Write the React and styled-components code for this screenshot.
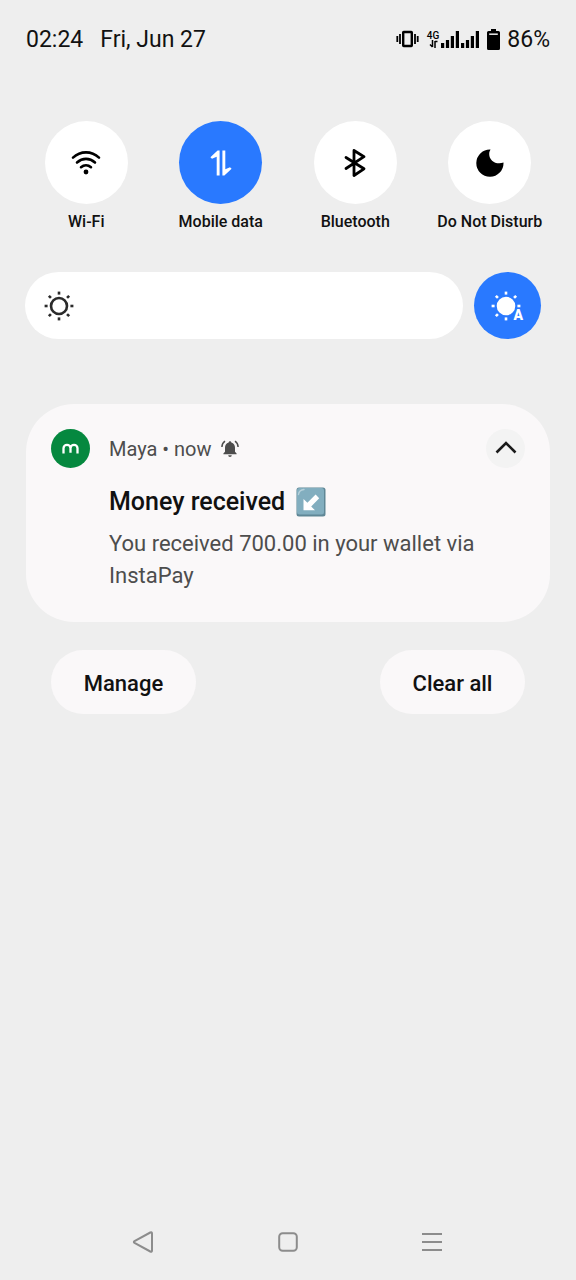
import React from 'react';
import styled, { createGlobalStyle } from 'styled-components';

const GlobalStyle = createGlobalStyle`
  * {
    box-sizing: border-box;
  }

  body {
    margin: 0;
    background: #eeeeee;
    color: #111111;
    font-family: Roboto, "Liberation Sans", sans-serif;
  }

  button,
  input {
    font-family: inherit;
    color: inherit;
  }

  svg {
    display: block;
    flex-shrink: 0;
  }
`;

const Shade = styled.div`
  display: flex;
  flex-direction: column;
  min-height: 100vh;
`;

const StatusBar = styled.header`
  display: flex;
  align-items: center;
  justify-content: space-between;
  height: 80px;
  padding: 0 26px;
  font-size: 23px;
  line-height: 28px;
`;

const StatusGroup = styled.div`
  display: flex;
  align-items: center;
  gap: ${({ $gap }) => $gap}px;
`;

const StatusIcons = styled.div`
  display: flex;
  align-items: center;
  gap: 8px;
  padding-bottom: 2px;
  color: #000000;
`;

const Network = styled.div`
  display: flex;
  flex-direction: column;
  align-items: center;
  font-size: 10px;
  font-weight: 500;
  line-height: 9px;
`;

const Signal = styled.div`
  display: flex;
  align-items: center;
  gap: 2px;
`;

const Tiles = styled.section`
  display: grid;
  grid-template-columns: repeat(4, 1fr);
  margin-top: 41px;
  padding: 0 19px;
`;

const Tile = styled.button`
  display: flex;
  flex-direction: column;
  align-items: center;
  gap: 8px;
  padding: 0;
  border: none;
  background: none;
  font-size: 16px;
  font-weight: 500;
  line-height: 20px;
  white-space: nowrap;
  cursor: pointer;
`;

const TileCircle = styled.span`
  display: flex;
  align-items: center;
  justify-content: center;
  width: 83px;
  height: 83px;
  border-radius: 50%;
  background: ${({ $active }) => ($active ? '#2979ff' : '#ffffff')};
  color: ${({ $active }) => ($active ? '#ffffff' : '#000000')};
`;

const BrightnessRow = styled.section`
  display: flex;
  align-items: center;
  gap: 11px;
  margin-top: 40px;
  padding: 0 35px 0 25px;
`;

const SliderWrap = styled.label`
  position: relative;
  flex: 1;
  height: 67px;
  color: #2b2b2b;

  svg {
    position: absolute;
    top: 18px;
    left: 18px;
    pointer-events: none;
  }
`;

const Slider = styled.input`
  display: block;
  width: 100%;
  height: 100%;
  margin: 0;
  border-radius: 34px;
  background: #ffffff;
  appearance: none;
  cursor: pointer;

  &::-webkit-slider-thumb {
    appearance: none;
    width: 67px;
    height: 67px;
    background: transparent;
  }
`;

const AutoButton = styled.button`
  position: relative;
  display: flex;
  align-items: center;
  justify-content: center;
  width: 67px;
  height: 67px;
  padding: 0 4px 0 0;
  border: none;
  border-radius: 50%;
  background: #2979ff;
  color: #ffffff;
  cursor: pointer;
`;

const AutoBadge = styled.span`
  position: absolute;
  right: 18px;
  bottom: 17px;
  font-size: 14px;
  font-weight: 900;
  line-height: 13px;
`;

const Card = styled.article`
  display: grid;
  grid-template-columns: 39px 1fr;
  column-gap: 19px;
  margin: 65px 26px 0;
  padding: 25px 25px 30px;
  border-radius: 48px;
  background: #faf8f9;
`;

const CardHeader = styled.div`
  display: flex;
  align-items: center;
  justify-content: space-between;
  height: 39px;
`;

const AppInfo = styled.div`
  display: flex;
  align-items: center;
  gap: 9px;
  color: #4d4d4d;
  font-size: 20px;
  line-height: 24px;
`;

const CollapseButton = styled.button`
  display: flex;
  align-items: center;
  justify-content: center;
  width: 39px;
  height: 39px;
  padding: 0 0 2px;
  border: none;
  border-radius: 50%;
  background: #f3f3f3;
  cursor: pointer;
`;

const CardBody = styled.div`
  grid-column: 2;
`;

const Title = styled.h2`
  display: flex;
  align-items: center;
  gap: 11px;
  margin: 18px 0 10px;
  font-size: 25px;
  font-weight: 500;
  line-height: 32px;
`;

const Message = styled.p`
  margin: 0;
  color: #4d4d4d;
  font-size: 22px;
  line-height: 32px;
`;

const Actions = styled.div`
  display: flex;
  justify-content: space-between;
  margin-top: 28px;
  padding: 0 51px;
`;

const ActionButton = styled.button`
  min-width: 145px;
  height: 64px;
  padding: 3px 32px 0;
  border: none;
  border-radius: 32px;
  background: #faf8f9;
  font-size: 22px;
  font-weight: 500;
  line-height: 28px;
  cursor: pointer;
`;

const NavBar = styled.nav`
  display: flex;
  justify-content: center;
  gap: 96px;
  margin-top: auto;
  padding-bottom: 14px;
`;

const NavButton = styled.button`
  display: flex;
  align-items: center;
  justify-content: center;
  width: 48px;
  height: 48px;
  padding: 0;
  border: none;
  background: none;
  color: #8c8c8c;
  cursor: pointer;
`;

const RAYS = [0, 45, 90, 135, 180, 225, 270, 315];

const VibrateIcon = () => (
  <svg width="23" height="18" viewBox="0 0 23 18" fill="none" stroke="currentColor" strokeWidth="1.8">
    <rect x="7.200" y="2" width="8.600" height="14" rx="0.500" strokeWidth="2.400" />
    <path d="M4 4v10M19 4v10M1.300 6v6M21.700 6v6" />
  </svg>
);

const DataArrowsIcon = () => (
  <svg width="9" height="8" viewBox="0 0 9 8" fill="none" stroke="currentColor" strokeWidth="1.5">
    <path d="M3.500 0v7M1 4.500L3.500 7M6 8V1M6 1.500h2.500" />
  </svg>
);

const SignalIcon = () => (
  <svg width="18" height="17" viewBox="0 0 18 17" fill="currentColor">
    <path d="M0 12h3.200v5H0zM4.900 9h3.200v8H4.900zM9.800 5H13v12H9.800zM14.800 0H18v17h-3.200z" />
  </svg>
);

const BatteryIcon = () => (
  <svg width="13" height="21" viewBox="0 0 13 21">
    <path d="M4 0h5v2h2.500q1.500 0 1.500 1.500v16q0 1.500-1.500 1.500h-10Q0 21 0 19.500v-16Q0 2 1.500 2H4z" fill="currentColor" />
    <path d="M2.200 5.200h8.600" stroke="#e0e0e0" strokeWidth="1.600" />
  </svg>
);

const WifiIcon = () => (
  <svg width="30" height="24" viewBox="0 0 30 24" fill="none" stroke="currentColor" strokeWidth="2.6" strokeLinecap="round">
    <path d="M2 6.600C9.500-.4 20.500-.4 28 6.600M6 11.500c5.400-4.800 12.600-4.800 18 0M10 16.200c3-2.600 7-2.600 10 0" />
    <circle cx="15" cy="21" r="2.400" fill="currentColor" stroke="none" />
  </svg>
);

const MobileDataIcon = () => (
  <svg width="24" height="28" viewBox="0 0 24 28" fill="currentColor">
    <path d="M10.600 1.500v25H7.700V7.800L3 9.800 1.400 8.200 8.600 1.500zM13.400 1.500h2.900v18.700l4.700-2 1.600 1.600-7.200 6.700h-2z" />
  </svg>
);

const BluetoothIcon = () => (
  <svg width="22" height="30" viewBox="0 0 22 30" fill="none" stroke="currentColor" strokeWidth="2.800" strokeLinejoin="round" strokeLinecap="round">
    <path d="M2 9.500l18 11.300L10 27.500V2.500l10 6.200L2 20.500" />
  </svg>
);

const MoonIcon = () => (
  <svg width="28" height="28" viewBox="0 0 28 28" fill="currentColor">
    <path d="M14.500.5A8.800 8.800 0 0 0 13.200 5c0 6.500 6.800 11.300 14.300 8.600A13.600 13.600 0 1 1 14.500.5z" />
  </svg>
);

const SunIcon = ({ filled, rays = RAYS }) => (
  <svg width="32" height="32" viewBox="0 0 32 32" fill="none" stroke="currentColor" strokeWidth="2.600">
    <circle cx="16" cy="16" r="8" fill={filled ? 'currentColor' : 'none'} />
    {rays.map((angle) => (
      <path key={angle} d="M16 1.600v3" transform={`rotate(${angle} 16 16)`} />
    ))}
    {/* notch that keeps the badge letter clear of the disc */}
    {filled && <path d="M22.500 32l4-12.500h3L33 32z" fill="#2979ff" stroke="#2979ff" strokeWidth="2" />}
  </svg>
);

const MayaLogo = () => (
  <svg width="39" height="39" viewBox="0 0 39 39" fill="none" role="img" aria-label="Maya">
    <circle cx="19.500" cy="19.500" r="19.500" fill="#05883f" />
    <path
      d="M12.500 24.500v-5.200a3.500 3.500 0 0 1 7 0v4.500M19.500 19.300a3.500 3.500 0 0 1 7 0v5.200"
      stroke="#ffffff"
      strokeWidth="2.300"
    />
  </svg>
);

const BellIcon = () => (
  <svg width="18" height="18" viewBox="0 0 18 18" fill="currentColor">
    <path d="M9 1.200c.9 0 1.300.6 1.300 1.300 2.600.6 3.700 2.700 3.700 5.200v4.100l1.600 1.600v.9H2.400v-.9L4 11.800V7.700c0-2.500 1.100-4.600 3.700-5.200 0-.7.4-1.300 1.300-1.300zM7.200 15.300h3.600a1.800 1.800 0 0 1-3.600 0z" />
    <path d="M4 1.200Q1 3.200.9 7M14 1.200q3 2 3.100 5.800" fill="none" stroke="currentColor" strokeWidth="1.500" />
  </svg>
);

const ChevronIcon = () => (
  <svg width="24" height="16" viewBox="0 0 24 16" fill="none" stroke="#1b1b1b" strokeWidth="2.600">
    <path d="M2.500 12.500L12 3l9.500 9.500" />
  </svg>
);

const ArrowEmoji = () => (
  <svg width="30" height="30" viewBox="0 0 30 30" role="img" aria-label="South-west arrow">
    <rect x="0.500" y="0.500" width="29" height="29" rx="2.500" fill="#5f8796" />
    <rect x="1" y="1" width="27" height="26.500" rx="2.500" fill="#82aebf" />
    <path d="M2.500 7.500Q3 3 8 2.500" fill="none" stroke="#b5d0da" strokeWidth="1.400" strokeLinecap="round" />
    <path d="M7.500 12v11.300H19l-3.800-3.900 8-8.200-3.600-3.700-8.200 8.200z" fill="#ffffff" />
  </svg>
);

const BackIcon = () => (
  <svg width="24" height="22" viewBox="0 0 24 22" fill="none" stroke="currentColor" strokeWidth="2" strokeLinejoin="round">
    <path d="M2.500 10.200Q1.200 11 2.500 11.800L18.300 20.500Q20 21.200 20 19.500V2.500Q20 .8 18.300 1.500z" />
  </svg>
);

const HomeIcon = () => (
  <svg width="20" height="20" viewBox="0 0 20 20" fill="none" stroke="currentColor" strokeWidth="2">
    <rect x="1.200" y="1.200" width="17.600" height="17.600" rx="3.500" />
  </svg>
);

const RecentsIcon = () => (
  <svg width="20" height="20" viewBox="0 0 20 20" fill="none" stroke="currentColor" strokeWidth="2">
    <path d="M0 2h20M0 10h20M0 18h20" />
  </svg>
);

const tiles = [
  { label: 'Wi-Fi', icon: <WifiIcon /> },
  { label: 'Mobile data', icon: <MobileDataIcon />, active: true },
  { label: 'Bluetooth', icon: <BluetoothIcon /> },
  { label: 'Do Not Disturb', icon: <MoonIcon /> },
];

const App = () => (
  <>
    <GlobalStyle />
    <Shade>
      <StatusBar>
        <StatusGroup $gap={17}>
          <span>02:24</span>
          <span>Fri, Jun 27</span>
        </StatusGroup>
        <StatusGroup $gap={7}>
          <StatusIcons>
            <VibrateIcon />
            <Signal>
              <Network>
                <span>4G</span>
                <DataArrowsIcon />
              </Network>
              <SignalIcon />
              <SignalIcon />
            </Signal>
            <BatteryIcon />
          </StatusIcons>
          <span>86%</span>
        </StatusGroup>
      </StatusBar>

      <Tiles>
        {tiles.map(({ label, icon, active }) => (
          <Tile key={label} type="button" aria-pressed={Boolean(active)}>
            <TileCircle $active={active}>{icon}</TileCircle>
            {label}
          </Tile>
        ))}
      </Tiles>

      <BrightnessRow>
        <SliderWrap>
          <Slider type="range" min="0" max="100" defaultValue="0" aria-label="Brightness" />
          <SunIcon />
        </SliderWrap>
        <AutoButton type="button" aria-label="Automatic brightness" aria-pressed="true">
          <SunIcon filled rays={RAYS.filter((angle) => angle !== 135)} />
          <AutoBadge>A</AutoBadge>
        </AutoButton>
      </BrightnessRow>

      <Card>
        <MayaLogo />
        <CardHeader>
          <AppInfo>
            <span>Maya • now</span>
            <BellIcon />
          </AppInfo>
          <CollapseButton type="button" aria-label="Collapse">
            <ChevronIcon />
          </CollapseButton>
        </CardHeader>
        <CardBody>
          <Title>
            Money received
            <ArrowEmoji />
          </Title>
          <Message>You received 700.00 in your wallet via InstaPay</Message>
        </CardBody>
      </Card>

      <Actions>
        <ActionButton type="button">Manage</ActionButton>
        <ActionButton type="button">Clear all</ActionButton>
      </Actions>

      <NavBar>
        <NavButton type="button" aria-label="Back">
          <BackIcon />
        </NavButton>
        <NavButton type="button" aria-label="Home">
          <HomeIcon />
        </NavButton>
        <NavButton type="button" aria-label="Recent apps">
          <RecentsIcon />
        </NavButton>
      </NavBar>
    </Shade>
  </>
);

export default App;
